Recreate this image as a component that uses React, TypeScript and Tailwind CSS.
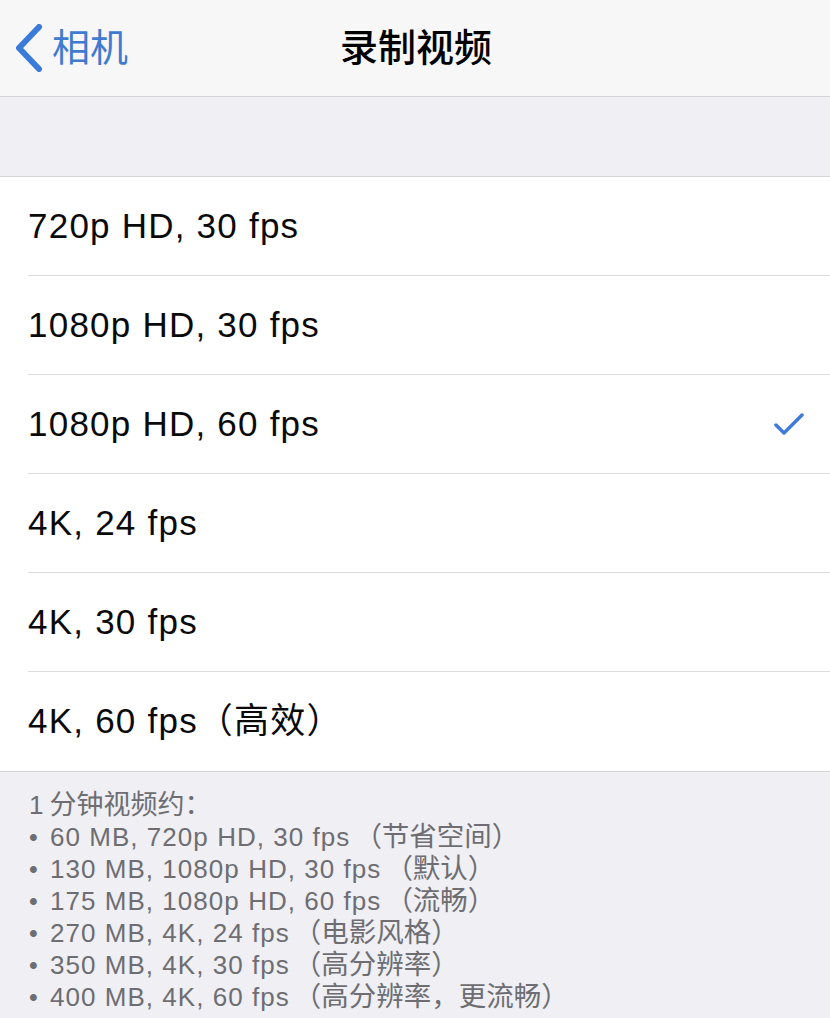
import React from 'react';

const options = [
  '720p HD, 30 fps',
  '1080p HD, 30 fps',
  '1080p HD, 60 fps',
  '4K, 24 fps',
  '4K, 30 fps',
  '4K, 60 fps（高效）',
];

// latin part, CJK part (PingFang renders larger than SF, so CJK gets its own size)
const notes: [string, string][] = [
  ['60 MB, 720p HD, 30 fps', '（节省空间）'],
  ['130 MB, 1080p HD, 30 fps', '（默认）'],
  ['175 MB, 1080p HD, 60 fps', '（流畅）'],
  ['270 MB, 4K, 24 fps', '（电影风格）'],
  ['350 MB, 4K, 30 fps', '（高分辨率）'],
  ['400 MB, 4K, 60 fps', '（高分辨率，更流畅）'],
];

export default function App() {
  const selected = 2;

  return (
    <div className="w-[830px] h-[1018px] overflow-hidden bg-[#efeff4] font-['Liberation_Sans','Noto_Sans_CJK_SC',sans-serif]">
      {/* Nav bar */}
      <div className="relative h-[97px] bg-[#f7f7f8] border-b border-[#d4d4d8] flex items-center">
        <div className="flex items-center pl-[13px] gap-[9px] text-[#3a7ad9]">
          <svg width="30" height="48" viewBox="0 0 30 48" fill="none">
            <path d="M26 3 L6 24 L26 45" stroke="currentColor" strokeWidth="6" strokeLinecap="round" strokeLinejoin="round" />
          </svg>
          <span className="text-[38px] leading-none text-[#3f7bd0]">相机</span>
        </div>
        <div className="absolute inset-x-0 top-0 h-full flex items-center justify-center pointer-events-none">
          <span className="text-[38px] leading-none font-medium text-black ml-[2px]">录制视频</span>
        </div>
      </div>

      {/* Spacer band */}
      <div className="h-[80px] border-b border-[#d4d4d8]" />

      {/* Options */}
      <div className="bg-white border-b border-[#d4d4d8]">
        {options.map((opt, i) => (
          <div key={opt} className="pl-[28px]">
            <div
              className={`h-[99px] flex items-center justify-between pr-[26px] ${i < options.length - 1 ? 'border-b border-[#dcdce0]' : ''}`}
            >
              <span className="text-[35px] tracking-[0.035em] text-[#0a0a0a]">{opt}</span>
              {i === selected && (
                <svg width="30" height="24" viewBox="0 0 30 24" fill="none" className="text-[#3f7bd8]">
                  <path d="M2 13 L10 21 L28 3" stroke="currentColor" strokeWidth="3.5" strokeLinecap="round" strokeLinejoin="round" />
                </svg>
              )}
            </div>
          </div>
        ))}
      </div>

      {/* Footer notes */}
      <div className="pl-[29px] pt-[17px] leading-[32px] text-[#6d6d72] whitespace-nowrap">
        <div className="h-[32px]">
          <span className="text-[26px]">1</span>
          <span className="text-[27px] ml-[6px]">分钟视频约：</span>
        </div>
        {notes.map(([latin, cjk]) => (
          <div key={latin} className="h-[32px]">
            <span className="inline-block w-[21px] text-[25px]">•</span>
            <span className="text-[26px] tracking-[0.04em]">{latin}</span>
            <span className="text-[27.5px] ml-[4px]">{cjk}</span>
          </div>
        ))}
      </div>
    </div>
  );
}
